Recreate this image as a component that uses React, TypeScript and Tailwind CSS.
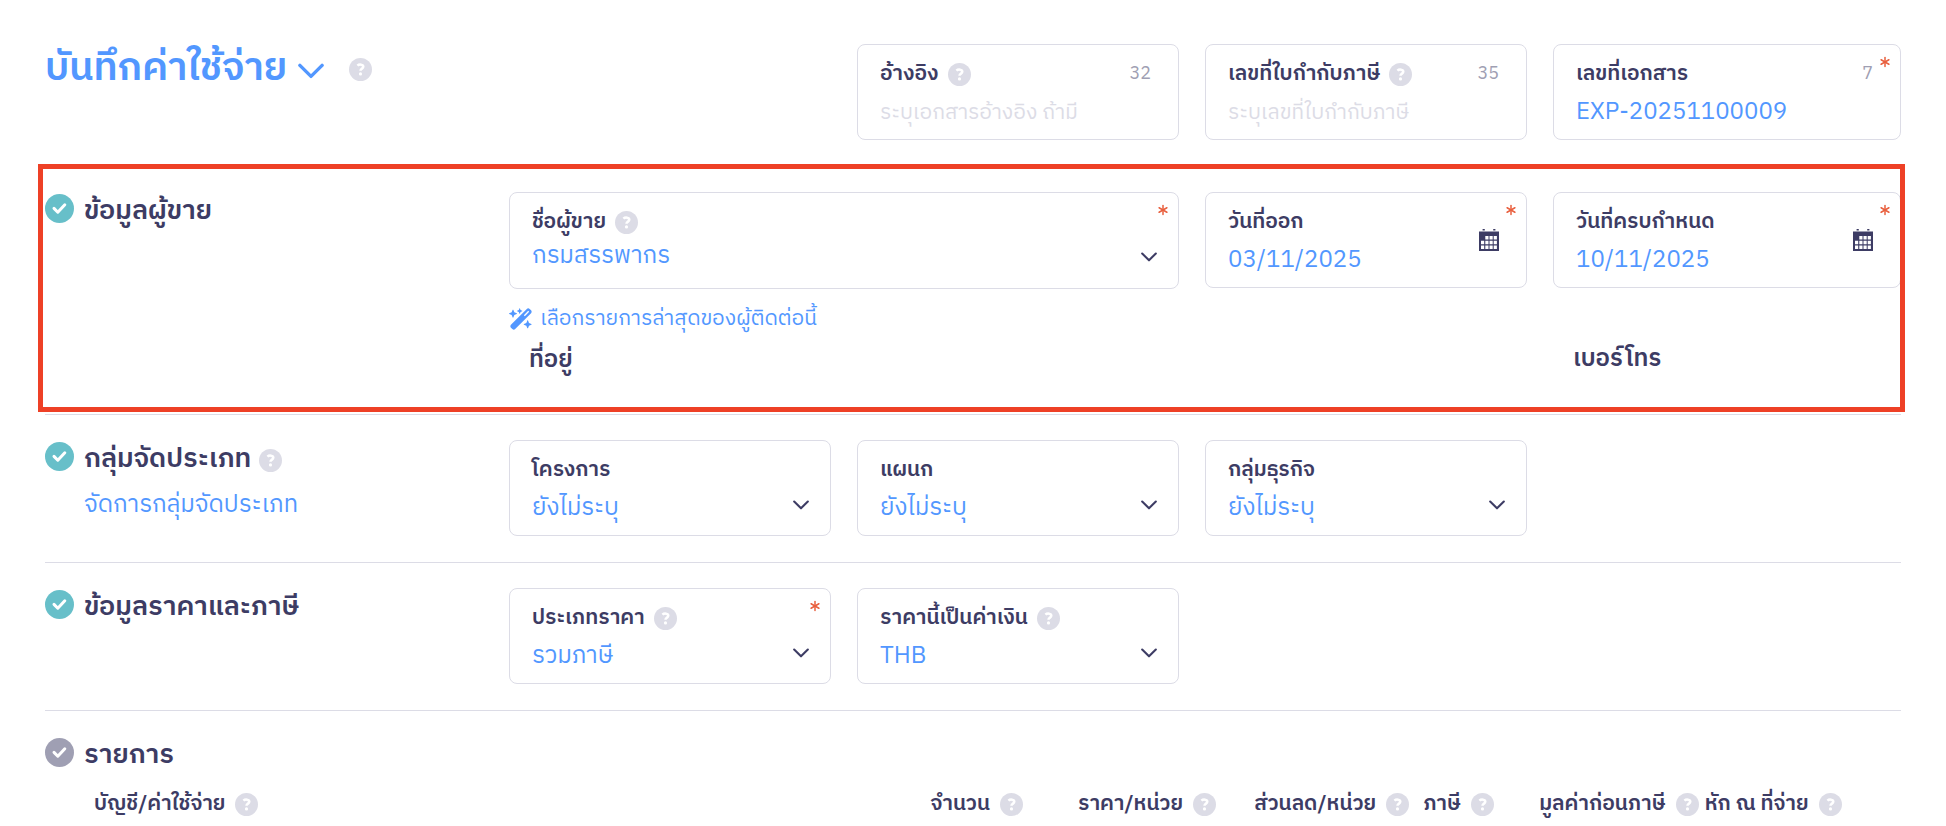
import type { ReactNode } from 'react';
import { Asterisk } from 'lucide-react';
import { FaWandMagicSparkles } from 'react-icons/fa6';

const Help = () => (
  <svg viewBox="0 0 23 23" className="size-[23px] shrink-0" aria-hidden="true">
    <circle cx="11.5" cy="11.5" r="11.5" fill="#dcdce6" />
    <path
      d="M8.4 7.7c1.8-1.7 5.9-1.5 5.9 1.1 0 1.9-2.8 1.8-2.8 3.9"
      fill="none"
      stroke="#fff"
      strokeWidth="2.5"
    />
    <circle cx="11.5" cy="15.9" r="1.6" fill="#fff" />
  </svg>
);

const CheckMark = ({ color }: { color: string }) => (
  <svg viewBox="0 0 29 29" className="size-[29px] shrink-0" aria-hidden="true">
    <circle cx="14.5" cy="14.5" r="14.5" fill={color} />
    <path
      d="M9 14.4l3.8 3.8 7-7.4"
      fill="none"
      stroke="#fff"
      strokeWidth="3"
      strokeLinecap="round"
      strokeLinejoin="round"
    />
  </svg>
);

const Chevron = ({ className }: { className: string }) => (
  <svg viewBox="0 0 26 16" className={className} aria-hidden="true">
    <path
      d="M1.9 2.4L13 13.4 24.1 2.4"
      fill="none"
      stroke="currentColor"
      strokeWidth="3.4"
      strokeLinecap="round"
      strokeLinejoin="round"
    />
  </svg>
);

const Calendar = () => (
  <svg viewBox="0 0 20 22" className="h-[22px] w-5" aria-hidden="true">
    <path d="M0 2.4h20V22H0zM3.6 0h2.2v1.6H3.6zM14.2 0h2.2v1.6h-2.2z" fill="#3d3c64" />
    <path
      d="M6.3 7h3.2v3.6H6.3zM10.5 7h3.2v3.6h-3.2zM14.7 7h3.2v3.6h-3.2zM2 11.8h3.2v3.4H2zM6.3 11.8h3.2v3.4H6.3zM10.5 11.8h3.2v3.4h-3.2zM14.7 11.8h3.2v3.4h-3.2zM2 16.6h3.2V20H2zM6.3 16.6h3.2V20H6.3zM10.5 16.6h3.2V20h-3.2zM14.7 16.6h3.2V20h-3.2z"
      fill="#fff"
    />
  </svg>
);

type FieldProps = {
  id: string;
  label: string;
  help?: boolean;
  count?: number;
  required?: boolean;
  compact?: boolean;
  className?: string;
  children: ReactNode;
};

const Field = ({ id, label, help, count, required, compact, className = 'mr-[26px]', children }: FieldProps) => (
  <div
    className={`relative rounded-lg border border-[#dcdce6] px-[22px] pt-[14px] ${compact ? 'pb-[14px]' : 'pb-[9px]'} ${className}`}
  >
    <div className="flex items-center gap-[9px] leading-[30px]">
      <label htmlFor={id} className="text-[21px] font-semibold whitespace-nowrap">
        {label}
      </label>
      {help && <Help />}
      {count && <span className="ml-auto pr-[5px] text-[18px] text-[#9f9fb3]">{count}</span>}
    </div>
    <div className={`flex h-9 items-center ${compact ? 'mt-px' : 'mt-[5px]'}`}>{children}</div>
    {required && (
      <Asterisk className="absolute top-[8px] right-[6px] size-[18px] text-[#e9603f]" strokeWidth={2} />
    )}
  </div>
);

type TextFieldProps = Omit<FieldProps, 'children'> & {
  value?: string;
  placeholder?: string;
  date?: boolean;
};

const TextField = ({ value, placeholder, date, ...field }: TextFieldProps) => (
  <Field {...field}>
    <input
      id={field.id}
      type="text"
      defaultValue={value}
      placeholder={placeholder}
      className="h-9 w-full min-w-0 bg-transparent text-[24px] text-[#5297ff] outline-none placeholder:text-[21px] placeholder:text-[#dcdce6]"
    />
    {date && (
      <button type="button" aria-label="เลือกวันที่" className="absolute top-[36px] right-[27px]">
        <Calendar />
      </button>
    )}
  </Field>
);

type SelectFieldProps = Omit<FieldProps, 'children'> & { value: string };

const SelectField = ({ value, ...field }: SelectFieldProps) => (
  <Field {...field}>
    <select
      id={field.id}
      className="h-9 w-full appearance-none bg-transparent text-[24px] text-[#5297ff] outline-none"
    >
      <option>{value}</option>
    </select>
    <Chevron className="pointer-events-none absolute top-[59px] right-[21px] h-[10px] w-4" />
  </Field>
);

const SectionTitle = ({ children, color = '#67bfc9' }: { children: ReactNode; color?: string }) => (
  <div className="flex h-[32px] items-start gap-[10px]">
    <div className="pt-[2px]">
      <CheckMark color={color} />
    </div>
    <h2 className="text-[27px] leading-[38px] font-semibold whitespace-nowrap">{children}</h2>
  </div>
);

const columns = [
  { title: 'บัญชี/ค่าใช้จ่าย', className: 'justify-start pl-[49px]', width: 'w-[42.3%]' },
  { title: 'จำนวน', className: 'justify-end', width: 'w-[10.4%]' },
  { title: 'ราคา/หน่วย', className: 'justify-end', width: 'w-[10.4%]' },
  { title: 'ส่วนลด/หน่วย', className: 'justify-end', width: 'w-[10.4%]' },
  { title: 'ภาษี', className: 'justify-start pl-[14px]', width: 'w-[6.7%]' },
  { title: 'มูลค่าก่อนภาษี', className: 'justify-end', width: 'w-[8.9%]' },
  { title: 'หัก ณ ที่จ่าย', className: 'justify-start pl-[6px]', width: 'w-[10.9%]' },
];

const grid = 'grid grid-cols-[4fr_3fr_3fr_3fr_3fr] items-start';

export default function App() {
  return (
    <main className="bg-white px-[45px] pt-[44px] font-['IBM_Plex_Sans_Thai','Noto_Sans_Thai','Noto_Sans',sans-serif] text-[#3d3c64]">
      <header className={`${grid} pb-6`}>
        <div className="col-span-2 flex items-center">
          <h1>
            <button type="button" className="flex items-center gap-[11px] text-[#5297ff]">
              <span className="text-[39px] leading-[50px] font-semibold">บันทึกค่าใช้จ่าย</span>
              <Chevron className="mt-1 h-4 w-[26px]" />
            </button>
          </h1>
          <span className="ml-[25px]">
            <Help />
          </span>
        </div>
        <TextField id="reference" label="อ้างอิง" help count={32} placeholder="ระบุเอกสารอ้างอิง ถ้ามี" />
        <TextField
          id="tax-invoice"
          label="เลขที่ใบกำกับภาษี"
          help
          count={35}
          placeholder="ระบุเลขที่ใบกำกับภาษี"
        />
        <TextField id="document" label="เลขที่เอกสาร" count={7} required value="EXP-20251100009" className="" />
      </header>

      <section className={`${grid} relative pt-7 pb-[34px]`}>
        <SectionTitle>ข้อมูลผู้ขาย</SectionTitle>
        <div className="col-span-2">
          <SelectField id="vendor" label="ชื่อผู้ขาย" help required compact value="กรมสรรพากร" />
          <a href="#latest" className="mt-3 flex h-9 items-center gap-[7px] text-[#5297ff]">
            <FaWandMagicSparkles className="size-6" />
            <span className="text-[21px] leading-9">เลือกรายการล่าสุดของผู้ติดต่อนี้</span>
          </a>
          <p className="pt-[3px] pl-5 text-[24px] leading-10 font-semibold">ที่อยู่</p>
        </div>
        <TextField id="issue-date" label="วันที่ออก" required date value="03/11/2025" />
        <div>
          <TextField id="due-date" label="วันที่ครบกำหนด" required date value="10/11/2025" className="" />
          <p className="mt-12 pt-[3px] pl-5 text-[24px] leading-10 font-semibold">เบอร์โทร</p>
        </div>
        <div className="pointer-events-none absolute top-0 -right-1 bottom-[2px] -left-[7px] border-[5px] border-[#ee4026]" />
      </section>

      <section className={`${grid} border-t border-[#dcdce6] pt-[25px] pb-[26px]`}>
        <div>
          <div className="flex items-end gap-2">
            <SectionTitle>กลุ่มจัดประเภท</SectionTitle>
            <Help />
          </div>
          <a href="#groups" className="mt-[13px] ml-[39px] block text-[24px] leading-10 text-[#5297ff]">
            จัดการกลุ่มจัดประเภท
          </a>
        </div>
        <SelectField id="project" label="โครงการ" value="ยังไม่ระบุ" />
        <SelectField id="department" label="แผนก" value="ยังไม่ระบุ" />
        <SelectField id="business-group" label="กลุ่มธุรกิจ" value="ยังไม่ระบุ" />
      </section>

      <section className={`${grid} border-t border-[#dcdce6] pt-[25px] pb-[26px]`}>
        <SectionTitle>ข้อมูลราคาและภาษี</SectionTitle>
        <SelectField id="price-type" label="ประเภทราคา" help required value="รวมภาษี" />
        <SelectField id="currency" label="ราคานี้เป็นค่าเงิน" help value="THB" />
      </section>

      <section className="border-t border-[#dcdce6] pt-[25px]">
        <SectionTitle color="#9f9fb3">รายการ</SectionTitle>
        <table className="mt-4 w-full table-fixed">
          <thead>
            <tr>
              {columns.map((column) => (
                <th key={column.title} className={`${column.width} p-0 font-semibold`}>
                  <div className={`flex items-center gap-[10px] whitespace-nowrap ${column.className}`}>
                    <span className="text-[21px] leading-10">{column.title}</span>
                    <Help />
                  </div>
                </th>
              ))}
            </tr>
          </thead>
        </table>
      </section>
    </main>
  );
}
